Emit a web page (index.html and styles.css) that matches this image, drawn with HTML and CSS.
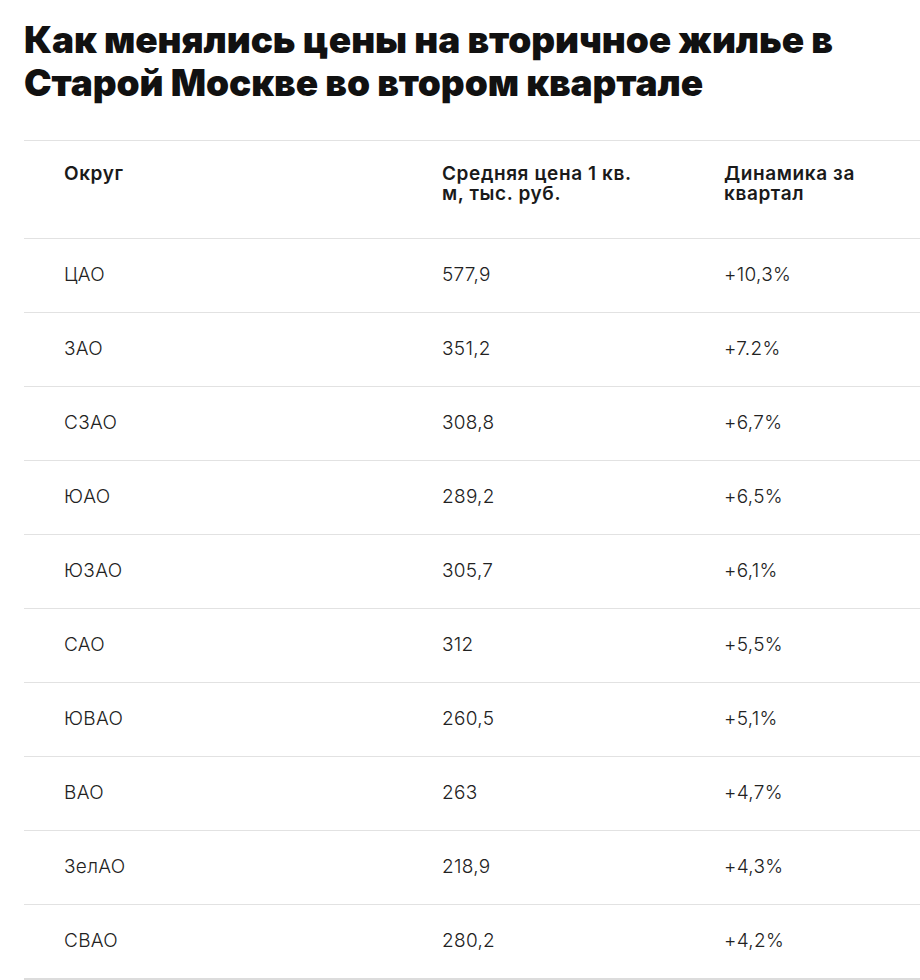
FILE: index.html
```html
<!DOCTYPE html>
<html lang="ru">
<head>
<meta charset="utf-8">
<link rel="stylesheet" href="styles.css">
</head>
<body>
<div class="page">
  <h1 class="title">Как менялись цены на вторичное жилье в Старой Москве во втором квартале</h1>
  <div class="table">
    <div class="row head">
      <div class="cell c1">Округ</div>
      <div class="cell c2">Средняя цена 1 кв. м, тыс. руб.</div>
      <div class="cell c3">Динамика за квартал</div>
    </div>
    <div class="row"><div class="cell c1">ЦАО</div><div class="cell c2">577,9</div><div class="cell c3">+10,3%</div></div>
    <div class="row"><div class="cell c1">ЗАО</div><div class="cell c2">351,2</div><div class="cell c3">+7.2%</div></div>
    <div class="row"><div class="cell c1">СЗАО</div><div class="cell c2">308,8</div><div class="cell c3">+6,7%</div></div>
    <div class="row"><div class="cell c1">ЮАО</div><div class="cell c2">289,2</div><div class="cell c3">+6,5%</div></div>
    <div class="row"><div class="cell c1">ЮЗАО</div><div class="cell c2">305,7</div><div class="cell c3">+6,1%</div></div>
    <div class="row"><div class="cell c1">САО</div><div class="cell c2">312</div><div class="cell c3">+5,5%</div></div>
    <div class="row"><div class="cell c1">ЮВАО</div><div class="cell c2">260,5</div><div class="cell c3">+5,1%</div></div>
    <div class="row"><div class="cell c1">ВАО</div><div class="cell c2">263</div><div class="cell c3">+4,7%</div></div>
    <div class="row"><div class="cell c1">ЗелАО</div><div class="cell c2">218,9</div><div class="cell c3">+4,3%</div></div>
    <div class="row last"><div class="cell c1">СВАО</div><div class="cell c2">280,2</div><div class="cell c3">+4,2%</div></div>
  </div>
</div>
</body>
</html>
```

FILE: styles.css
```css
html, body {
  margin: 0;
  padding: 0;
  background: #fff;
}
.page {
  padding: 18px 0 0 24px;
  font-family: Inter, "Noto Sans", sans-serif;
  color: #222;
}
.title {
  margin: 0;
  font-family: Inter, "Noto Sans", sans-serif;
  font-weight: 900;
  font-size: 37px;
  line-height: 43px;
  letter-spacing: -0.1px;
  color: #111;
  max-width: 840px;
}
.table {
  margin-top: 36px;
  border-top: 1px solid #e2e2e2;
}
.row {
  display: grid;
  grid-template-columns: 378px 282px 236px;
  height: 74px;
  align-items: center;
  border-bottom: 1px solid #e2e2e2;
  box-sizing: border-box;
}
.row.head {
  height: 98px;
  align-items: start;
}
.row.last {
  border-bottom: 3px solid #dcdcdc;
  height: 76px;
}
.cell {
  padding: 0 42px 3px 40px;
  font-size: 19px;
  font-weight: 300;
  letter-spacing: 0.3px;
  color: #222;
}
.head .cell {
  padding-top: 23px;
  padding-bottom: 0;
  font-size: 19px;
  font-weight: 600;
  line-height: 20px;
  letter-spacing: 0.6px;
  color: #1a1a1a;
}
```
